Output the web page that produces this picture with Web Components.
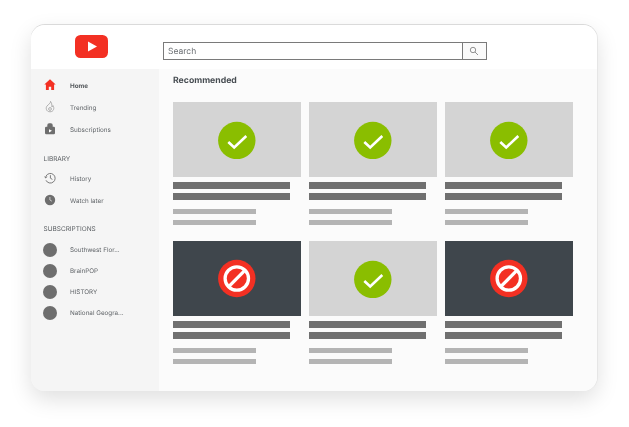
<!DOCTYPE html>
<html><head><meta charset="utf-8"><style>
html,body{margin:0;background:#fff;height:427px;overflow:hidden}
body{padding:25px 31px 0;box-sizing:border-box;font-family:Inter,Roboto,sans-serif;text-rendering:geometricPrecision}
app-window{box-shadow:0 -1px 0 #dadada,1px 0 0 #e6e6e6,0 8px 22px rgba(0,0,0,.13)}
</style></head><body>
<app-window>
  <app-header slot="header"></app-header>
  <app-sidebar slot="side">
    <nav-row active label="Home"><svg viewBox="0 0 12 12" width="12" height="12"><path d="M6 .2 .3 5.600h1.600v5.400h2.900V7.800h2.400v3.200h2.900V5.600h1.600Z" fill="#f33023"/></svg></nav-row>
    <nav-row label="Trending"><svg viewBox="0 0 12 12" width="12" height="12" fill="none" stroke="#999" stroke-width=".75"><path d="M6.500.4C6.800 2.200 4.400 3.400 3 5 1.600 6.700 1.900 10.700 6 10.800 9.800 10.800 10.600 7 9 4.600 8.800 5.400 8.300 5.800 7.800 5.900 8.100 3.800 7.600 1.600 6.500.4Z"/><circle cx="6" cy="8" r="1.400"/></svg></nav-row>
    <nav-row label="Subscriptions"><svg viewBox="0 0 12 12" width="12" height="12"><rect x="3.300" y=".2" width="5.400" height="5" rx="1.800" fill="#6e6e6e"/><rect x="1" y="3.800" width="10" height="7.400" rx="1.200" fill="#6e6e6e"/><path d="M5 6.200 8 7.800 5 9.400Z" fill="#fff"/></svg></nav-row>
    <side-head>LIBRARY</side-head>
    <nav-row label="History"><svg viewBox="0 0 12 12" width="12" height="12" fill="none" stroke="#7a7a7a" stroke-width="1"><path d="M2 4.200A4.800 4.800 0 1 1 2 8.300"/><path d="M0 4.500 1.700 6.600 3.600 4.600" fill="#7a7a7a" stroke="none"/><path d="M6.400 3.200v3l2 1.200"/></svg></nav-row>
    <nav-row label="Watch later"><svg viewBox="0 0 12 12" width="12" height="12"><circle cx="6" cy="6" r="5.200" fill="#6e6e6e"/><path d="M5.900 3v3l2 1.200" fill="none" stroke="#ddd" stroke-width=".8"/></svg></nav-row>
    <side-head second>SUBSCRIPTIONS</side-head>
    <nav-row sub label="Southwest Flor..."><channel-dot></channel-dot></nav-row>
    <nav-row sub label="BrainPOP"><channel-dot></channel-dot></nav-row>
    <nav-row sub label="HISTORY"><channel-dot></channel-dot></nav-row>
    <nav-row sub label="National Geogra..."><channel-dot></channel-dot></nav-row>
  </app-sidebar>
  <app-feed slot="main">
    <video-card ok></video-card><video-card ok></video-card><video-card ok></video-card>
    <video-card></video-card><video-card ok></video-card><video-card></video-card>
  </app-feed>
</app-window>
<script>
function def(name,html,init){customElements.define(name,class extends HTMLElement{
  constructor(){super();const s=this.attachShadow({mode:'open'});s.innerHTML=html;}
  connectedCallback(){init&&init(this,this.shadowRoot);}
});}
def('app-window',`<style>
:host{display:grid;grid-template-columns:128px 1fr;grid-template-rows:44px 1fr;width:566px;height:366px;border-radius:14px;overflow:hidden;background:#fbfbfb;box-sizing:border-box}
.h{grid-column:1/3}
</style><div class="h"><slot name="header"></slot></div><slot name="side"></slot><slot name="main"></slot>`);
def('app-header',`<style>
:host{display:flex;align-items:flex-start;height:44px;background:#fff;box-sizing:border-box}
.logo{width:33px;height:23px;margin:10px 0 0 44px;flex:none;display:block}
.search{display:flex;margin:17px 0 0 54.500px;height:18px}
.input{width:300px;box-sizing:border-box;border:1px solid #7a7a7a;background:#fff;font-size:8.500px;line-height:18px;color:#6b6f73;padding-left:4.500px}
.input span{filter:blur(.25px);display:block;height:16px}
.btn{width:24.500px;box-sizing:border-box;border:1px solid #7a7a7a;border-left:0;background:#fafafa;display:flex;align-items:center;justify-content:center}
</style>
<svg class="logo" viewBox="0 0 33 23"><rect width="33" height="23" rx="5.500" fill="#f33023"/><path d="M13 6.500 22 11.500 13 16.500Z" fill="#fff"/></svg>
<div class="search"><div class="input"><span>Search</span></div><div class="btn"><svg width="10" height="10" viewBox="0 0 10 10" fill="none" stroke="#777" stroke-width=".8"><circle cx="4" cy="4" r="2.700"/><path d="M6 6 9 9"/></svg></div></div>`);
def('app-sidebar',`<style>
:host{display:block;background:#f5f5f5;padding:5px 0 0 0;box-sizing:border-box;min-height:322px}
</style><slot></slot>`);
def('nav-row',`<style>
:host{display:flex;align-items:center;height:22px;font-size:6.300px;color:#62666a}
:host([active]){font-weight:700;color:#54585c}
:host([sub]){height:21px}
span{padding-top:2px}
:host([sub]) span{padding-top:0;padding-bottom:0}
.i{width:38px;margin-right:1px;display:flex;justify-content:center;flex:none}
span{white-space:nowrap;filter:blur(.25px)}
</style><div class="i"><slot></slot></div><span></span>`,(h,s)=>{s.querySelector('span').textContent=h.getAttribute('label')});
def('side-head',`<style>
:host{display:block;font-size:6.500px;color:#5c6064;padding:14px 0 3px 12.500px;line-height:10px}
:host([second]){padding:13px 0 5.500px 12.500px}
div{filter:blur(.25px)}
</style><div><slot></slot></div>`);
def('channel-dot',`<style>:host{display:block;width:14px;height:14px;border-radius:50%;background:#6e6e6e}</style>`);
def('app-feed',`<style>
:host{display:block;padding:5px 24px 0 14px;background:#fbfbfb}
h2{margin:0;font-size:8.700px;line-height:14px;font-weight:700;color:#474d52;filter:blur(.25px)}
.g{display:grid;grid-template-columns:repeat(3,128px);column-gap:8px;row-gap:16px;margin-top:14px}
</style><h2>Recommended</h2><div class="g"><slot></slot></div>`);
def('video-card',`<style>
:host{display:block;height:123px}
.t{height:75px;display:flex;align-items:center;justify-content:center;background:#d4d4d4}
:host(:not([ok])) .t{background:#3f464c}
.b{background:#707070;height:7px;width:117px;margin-top:4px}
.b.f{margin-top:5px}
.l{background:#b4b4b4;height:5px;width:83px;margin-top:6px}
.l.f{margin-top:9px}
svg{display:block}
</style><div class="t"></div><div class="b f"></div><div class="b"></div><div class="l f"></div><div class="l"></div>`,(h,s)=>{
 s.querySelector('.t').innerHTML=h.hasAttribute('ok')
 ?'<svg width="38" height="39" viewBox="0 0 38 39"><circle cx="18.800" cy="20.500" r="18.700" fill="#8abe00"/><path d="M10.300 22 16.200 27.500 28.300 16" fill="none" stroke="#fff" stroke-width="2.600"/></svg>'
 :'<svg width="38" height="39" viewBox="0 0 38 39"><circle cx="18.800" cy="19.500" r="18.700" fill="#f33023"/><circle cx="18.800" cy="19.500" r="11.700" fill="none" stroke="#fff" stroke-width="3.300"/><path d="M10.500 27.800 27.100 11.200" stroke="#fff" stroke-width="3.300"/></svg>';
});
</script>
</body></html>
